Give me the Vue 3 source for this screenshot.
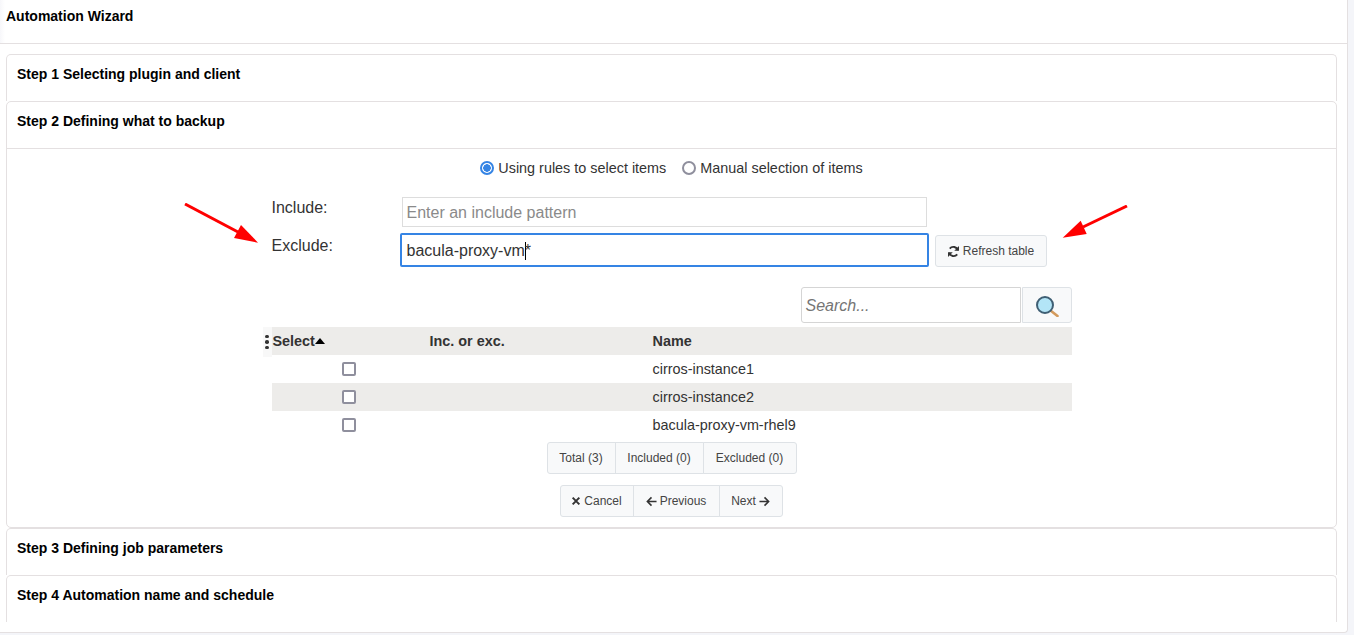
<script setup>
const rows = [
  { id: 1, name: 'cirros-instance1' },
  { id: 2, name: 'cirros-instance2' },
  { id: 3, name: 'bacula-proxy-vm-rhel9' }
]
</script>

<template>
  <div class="wizard">
    <div class="wizard-title">Automation Wizard</div>
    <div class="wizard-body">
      <section class="step">
        <h3 class="step-head">Step 1 Selecting plugin and client</h3>
      </section>

      <section class="step step-open">
        <h3 class="step-head">Step 2 Defining what to backup</h3>
        <div class="step-content">
          <div class="modes">
            <label class="mode"><span class="radio on"></span>Using rules to select items</label>
            <label class="mode"><span class="radio"></span>Manual selection of items</label>
          </div>

          <div class="form-area">
            <div class="pattern-row include-row">
              <span class="pattern-label">Include:</span>
              <div class="pattern-input placeholder">Enter an include pattern</div>
            </div>
            <div class="pattern-row exclude-row">
              <span class="pattern-label">Exclude:</span>
              <div class="pattern-input focused">bacula-proxy-vm<i class="caret"></i>*</div>
              <button class="btn refresh" type="button">
                <svg viewBox="0 0 16 16" width="13" height="13">
                  <path d="M13.4 6.6A5.8 5.8 0 0 0 3.4 4.4" fill="none" stroke="#333" stroke-width="2.3" />
                  <path d="M14.8 1.2v5.9H8.9z" fill="#333" />
                  <path d="M2.6 9.4a5.8 5.8 0 0 0 10 2.2" fill="none" stroke="#333" stroke-width="2.3" />
                  <path d="M1.2 14.8V8.9h5.9z" fill="#333" />
                </svg>
                Refresh table
              </button>
            </div>

            <div class="search-row">
              <div class="search-input">Search...</div>
              <button class="btn search-btn" type="button">
                <svg viewBox="0 0 24 24" width="24" height="24">
                  <path d="M15.5 17.5l7 5.5" stroke="#d39a5c" stroke-width="2.6" stroke-linecap="round" />
                  <circle cx="10" cy="12" r="8" fill="#b3e5f7" stroke="#3f5f74" stroke-width="2" />
                </svg>
              </button>
            </div>

            <div class="table-wrap">
              <span class="col-menu"><b></b><b></b><b></b></span>
              <table class="items">
                <thead>
                  <tr>
                    <th class="col-select">Select<span class="sort-up"></span></th>
                    <th class="col-inc">Inc. or exc.</th>
                    <th>Name</th>
                  </tr>
                </thead>
                <tbody>
                  <tr v-for="row in rows" :key="row.id">
                    <td class="cell-check"><span class="check"></span></td>
                    <td></td>
                    <td>{{ row.name }}</td>
                  </tr>
                </tbody>
              </table>
            </div>

            <div class="btn-group counts">
              <button class="btn total" type="button">Total (3)</button>
              <button class="btn included" type="button">Included (0)</button>
              <button class="btn excluded" type="button">Excluded (0)</button>
            </div>

            <div class="btn-group nav">
              <button class="btn cancel" type="button">
                <svg viewBox="0 0 12 12" width="10" height="10"><path d="M2 2l8 8M10 2l-8 8" stroke="#333" stroke-width="2.4" /></svg>
                Cancel
              </button>
              <button class="btn previous" type="button">
                <svg viewBox="0 0 12 12" width="11" height="11"><path d="M11.5 6H1.5M6 1.5L1.5 6 6 10.5" fill="none" stroke="#333" stroke-width="1.7" /></svg>
                Previous
              </button>
              <button class="btn next" type="button">
                Next
                <svg viewBox="0 0 12 12" width="11" height="11"><path d="M.5 6h10M6 1.5L10.5 6 6 10.5" fill="none" stroke="#333" stroke-width="1.7" /></svg>
              </button>
            </div>
          </div>

          <!-- red annotation arrows over the form -->
          <svg class="arrow arrow-left" viewBox="0 0 76 42" width="76" height="42">
            <path d="M1 1L54 29" stroke="#f00" stroke-width="3" />
            <path d="M74 39.7L50 35 57 22z" fill="#f00" />
          </svg>
          <svg class="arrow arrow-right" viewBox="0 0 66 34" width="66" height="34">
            <path d="M65 1L21 22" stroke="#f00" stroke-width="3" />
            <path d="M.7 32.7L18.7 15.7 24.7 29z" fill="#f00" />
          </svg>
        </div>
      </section>

      <section class="step">
        <h3 class="step-head">Step 3 Defining job parameters</h3>
      </section>
      <section class="step">
        <h3 class="step-head">Step 4 Automation name and schedule</h3>
      </section>
    </div>
  </div>
</template>

<style>
html,
body {
  background: #f4f5f9;
  overflow: hidden;
}
</style>

<style scoped>
.wizard {
  width: 1348px;
  height: 633px;
  box-sizing: border-box;
  background: #fff;
  border-right: 1px solid #e4e0e1;
  border-bottom: 1px solid #e4e0e1;
  border-bottom-right-radius: 4px;
  font-family: "Liberation Sans", Arial, sans-serif;
  color: #212529;
}

.wizard-title {
  height: 44px;
  box-sizing: border-box;
  padding: 8px 6px 0;
  font-size: 14px;
  line-height: 16px;
  font-weight: bold;
  color: #000;
  background: linear-gradient(to right, #f7f7fa, #fff 5px);
  border-bottom: 1px solid #e4e0e1;
}

.wizard-body {
  height: 578px;
  box-sizing: border-box;
  padding: 10px 10px 0 6px;
  overflow: hidden;
}

.step {
  border: 1px solid #e4e0e1;
  border-bottom: 0;
  border-radius: 5px 5px 0 0;
}

.step-open {
  border-bottom: 1px solid #e4e0e1;
  border-radius: 5px;
}

.step-head {
  margin: 0;
  height: 46px;
  box-sizing: border-box;
  padding: 11px 10px 0;
  font-size: 14px;
  line-height: 16px;
  font-weight: bold;
  color: #000;
}

.step-content {
  position: relative;
  height: 378px;
  border-top: 1px solid #e4e0e1;
}

.modes {
  display: flex;
  justify-content: center;
  gap: 16px;
  padding-top: 11px;
  height: 48px;
  box-sizing: border-box;
}

.mode {
  display: flex;
  align-items: center;
  gap: 4px;
  height: 16px;
  font-size: 14.4px;
  color: #333;
}

.radio {
  width: 14px;
  height: 14px;
  box-sizing: border-box;
  border: 2px solid #8f8f9d;
  border-radius: 50%;
}

.radio.on {
  border-color: #3584e4;
  background: radial-gradient(circle, #3584e4 0 3.5px, #fff 4px);
}

.form-area {
  width: 800px;
  margin: 0 auto;
  display: flex;
  flex-direction: column;
  align-items: stretch;
}

.pattern-row {
  display: flex;
  align-items: flex-start;
}

.pattern-label {
  width: 130px;
  flex: none;
  font-size: 16px;
  line-height: 20px;
  padding-top: 1px;
  color: #333;
}

.include-row {
  height: 36px;
}

.exclude-row {
  height: 54px;
}

.pattern-input {
  box-sizing: border-box;
  font-size: 16px;
  background: #fff;
}

.placeholder {
  width: 525px;
  height: 30px;
  padding: 0 4px;
  line-height: 29px;
  border: 1px solid #ddd;
  color: #8a8a8a;
}

.exclude-row .pattern-label {
  padding-top: 3px;
}

.focused {
  width: 529px;
  height: 34px;
  margin-left: -2px;
  padding: 0 5px;
  line-height: 32px;
  border: 2px solid #3584e4;
  border-radius: 2px;
  color: #333;
  white-space: nowrap;
}

.caret {
  display: inline-block;
  width: 1px;
  height: 18px;
  margin-right: -1px;
  vertical-align: -4px;
  background: #000;
}

.btn {
  font-family: inherit;
  font-size: 12px;
  color: #444;
  background: #f8f9fa;
  border: 1px solid #dee2e6;
  cursor: pointer;
}

.refresh {
  width: 112px;
  height: 32px;
  margin: 2px 0 0 6px;
  padding: 0;
  border-radius: 3px;
  display: flex;
  align-items: center;
  justify-content: center;
  gap: 3px;
}

.search-row {
  display: flex;
  justify-content: flex-end;
  gap: 1px;
  height: 40px;
}

.search-input {
  width: 220px;
  height: 36px;
  box-sizing: border-box;
  padding: 0 4px;
  line-height: 35px;
  font-size: 16px;
  font-style: italic;
  color: #757575;
  border: 1px solid #d5d5d5;
  border-radius: 3px 0 0 3px;
}

.search-btn {
  width: 50px;
  height: 36px;
  padding: 0;
  border-radius: 0 3px 3px 0;
  display: flex;
  align-items: center;
  justify-content: center;
}

.table-wrap {
  position: relative;
}

.col-menu {
  position: absolute;
  left: -9px;
  top: 0;
  width: 9px;
  height: 30px;
  background: #f8f8f8;
  display: flex;
  flex-direction: column;
  align-items: center;
  justify-content: center;
  gap: 2px;
}

.col-menu b {
  width: 3.5px;
  height: 3.5px;
  border-radius: 50%;
  background: #333;
}

.items {
  width: 100%;
  border-collapse: collapse;
  table-layout: fixed;
  font-size: 14.4px;
  color: #333;
}

.items th {
  height: 28px;
  padding: 0 4px;
  text-align: left;
  background: #edecea;
  font-weight: bold;
}

.items th.col-select {
  width: 154px;
  padding: 0 0 0 1px;
  box-sizing: border-box;
}

.items th.col-inc {
  width: 223px;
  box-sizing: border-box;
}

.sort-up {
  display: inline-block;
  margin-bottom: 2px;
  vertical-align: middle;
  border-left: 5px solid transparent;
  border-right: 5px solid transparent;
  border-bottom: 6px solid #000;
}

.items td {
  height: 28px;
  padding: 0 4px;
}

.items tbody tr:nth-child(even) td {
  background: #edecea;
}

.cell-check {
  text-align: center;
  font-size: 0;
}

.check {
  display: inline-block;
  width: 14px;
  height: 14px;
  box-sizing: border-box;
  border: 2px solid #8f8f9d;
  border-radius: 2px;
  vertical-align: middle;
  background: #fff;
}

.btn-group {
  display: flex;
  align-self: center;
}

.btn-group .btn {
  padding: 0;
  margin-left: -1px;
  display: flex;
  align-items: center;
  justify-content: center;
  gap: 3px;
}

.btn-group .btn:first-child {
  margin-left: 0;
  border-radius: 3px 0 0 3px;
}

.btn-group .btn:last-child {
  border-radius: 0 3px 3px 0;
}

.counts {
  margin-top: 3px;
  height: 32px;
}

.total { width: 69px; }
.included { width: 89px; }
.excluded { width: 94px; }

.nav {
  margin-top: 11px;
  margin-right: 1px;
  height: 32px;
}

.cancel { width: 74px; }
.previous { width: 87px; }
.next { width: 64px; }

.arrow {
  position: absolute;
}

.arrow-left {
  left: 177px;
  top: 54px;
}

.arrow-right {
  left: 1055px;
  top: 56px;
}
</style>
